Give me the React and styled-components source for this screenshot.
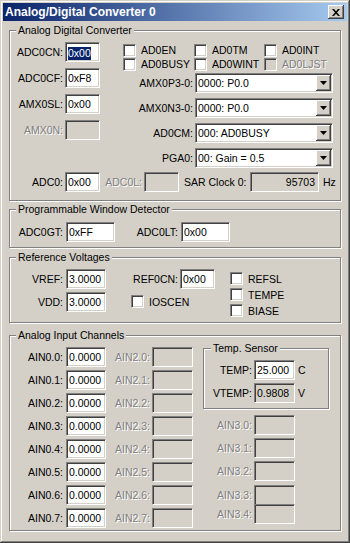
import React from 'react';
import styled, { createGlobalStyle, css } from 'styled-components';

const GlobalStyle = createGlobalStyle`
  html, body {
    margin: 0;
    padding: 0;
    background: #d4d0c8;
  }
  * {
    box-sizing: border-box;
  }
`;

const sunken = css`
  border: 1px solid;
  border-color: #808080 #ffffff #ffffff #808080;
  box-shadow: inset 1px 1px #404040, inset -1px -1px #d4d0c8;
`;

const raised = css`
  background: #d4d0c8;
  box-shadow: inset -1px -1px #404040, inset 1px 1px #ffffff, inset -2px -2px #808080;
`;

const Window = styled.div`
  width: 350px;
  height: 543px;
  padding: 3px;
  background: #d4d0c8;
  box-shadow: inset -1px -1px #404040, inset 1px 1px #d4d0c8,
    inset -2px -2px #808080, inset 2px 2px #ffffff;
  font-family: "Liberation Sans", Arial, sans-serif;
  font-size: 10.5px;
  color: #000;
  display: flex;
  flex-direction: column;
  overflow: hidden;
`;

const TitleBar = styled.div`
  height: 18px;
  flex: none;
  display: flex;
  align-items: center;
  justify-content: space-between;
  padding: 0 3px 0 2px;
  background: linear-gradient(to right, #0a246a, #a6caf0);
  color: #fff;
  font-size: 12px;
  font-weight: bold;
  white-space: nowrap;
`;

const CloseButton = styled.div`
  width: 16px;
  height: 14px;
  display: flex;
  align-items: center;
  justify-content: center;
  ${raised}
`;

const Body = styled.div`
  padding: 3px 6px 0;
  display: flex;
  flex-direction: column;
`;

const Group = styled.fieldset`
  margin: ${p => p.$mt || 0}px 0 0;
  padding: ${p => p.$pt}px 0 ${p => p.$pb}px;
  width: ${p => (p.$w ? `${p.$w}px` : 'auto')};
  border: 1px solid #808080;
  box-shadow: 1px 1px #ffffff, inset 1px 1px #ffffff;
  min-width: 0;
`;

const Legend = styled.legend`
  margin-left: ${p => p.$ml ?? 6}px;
  padding: 0 2px;
  height: 12px;
  line-height: 12px;
  background: #d4d0c8;
  white-space: nowrap;
`;

const Row = styled.div`
  display: flex;
  align-items: center;
  height: ${p => p.$h || 20}px;
  margin-top: ${p => p.$mt || 0}px;
  flex: none;
`;

const Label = styled.span`
  flex: none;
  width: ${p => (p.$w ? `${p.$w}px` : 'auto')};
  margin-left: ${p => p.$ml || 0}px;
  margin-right: ${p => p.$gap ?? 2}px;
  text-align: ${p => p.$align || 'right'};
  white-space: nowrap;
  ${p =>
    p.$disabled &&
    css`
      color: #808080;
      text-shadow: 1px 1px 0 #ffffff;
    `}
`;

const Box = styled.div`
  flex: none;
  width: ${p => p.$w}px;
  height: 20px;
  ${sunken}
  background: ${p => (p.$face ? '#d4d0c8' : '#ffffff')};
  padding: 0 3px 0 2px;
  line-height: 18px;
  text-align: ${p => (p.$right ? 'right' : 'left')};
  white-space: nowrap;
  overflow: hidden;
`;

const Selected = styled.span`
  display: inline-block;
  background: #0a246a;
  color: #fff;
  line-height: 13px;
  vertical-align: middle;
`;

const Unit = styled.span`
  margin-left: ${p => p.$ml || 3}px;
  white-space: nowrap;
`;

const Check = styled.span`
  flex: none;
  width: 13px;
  height: 13px;
  ${sunken}
  background: ${p => (p.$disabled ? '#d4d0c8' : '#ffffff')};
`;

const CheckItem = styled.div`
  display: flex;
  align-items: center;
  gap: 5px;
  height: ${p => p.$h || 13}px;
  margin-top: ${p => p.$mt || 0}px;
  white-space: nowrap;
`;

const CheckText = styled.span`
  ${p =>
    p.$disabled &&
    css`
      color: #808080;
      text-shadow: 1px 1px 0 #ffffff;
    `}
`;

const Combo = styled.div`
  flex: none;
  width: ${p => p.$w}px;
  height: 20px;
  ${sunken}
  background: #fff;
  display: flex;
  align-items: center;
  padding: 1px 1px 1px 2px;
`;

const ComboText = styled.span`
  flex: 1;
  white-space: nowrap;
  overflow: hidden;
`;

const DropButton = styled.span`
  flex: none;
  width: 15px;
  height: 16px;
  display: flex;
  align-items: center;
  justify-content: center;
  ${raised}
`;

const AdcTop = styled.div`
  display: flex;
  gap: 23px;
`;

const Stack = styled.div`
  flex: none;
  display: flex;
  flex-direction: column;
  gap: ${p => p.$gap || 0}px;
  width: ${p => (p.$w ? `${p.$w}px` : 'auto')};
  margin-left: ${p => p.$ml || 0}px;
  margin-top: ${p => p.$mt || 0}px;
`;

const CheckGrid = styled.div`
  display: grid;
  grid-template-columns: 71px 70px 69px;
  grid-auto-rows: 14px;
  margin: 1px 0 2px;
`;

const Columns = styled.div`
  display: flex;
  align-items: flex-start;
`;

const Field = ({ label, lw, gap = 2, bw, children, disabled, face, right, mt, unit }) => (
  <Row $mt={mt}>
    <Label $w={lw} $gap={gap} $disabled={disabled}>{label}</Label>
    <Box $w={bw} $face={face || disabled} $right={right}>{children}</Box>
    {unit && <Unit>{unit}</Unit>}
  </Row>
);

const CheckBox = ({ label, disabled, mt, h }) => (
  <CheckItem $mt={mt} $h={h}>
    <Check $disabled={disabled} />
    <CheckText $disabled={disabled}>{label}</CheckText>
  </CheckItem>
);

const DropDown = ({ label, value }) => (
  <Row>
    <Label $w={70} $gap={2}>{label}</Label>
    <Combo $w={138}>
      <ComboText>{value}</ComboText>
      <DropButton>
        <svg width="7" height="4" viewBox="0 0 7 4">
          <path d="M0 0h7L3.5 4z" fill="#000" />
        </svg>
      </DropButton>
    </Combo>
  </Row>
);

const adcChecks = [
  { label: 'AD0EN' },
  { label: 'AD0TM' },
  { label: 'AD0INT' },
  { label: 'AD0BUSY' },
  { label: 'AD0WINT' },
  { label: 'AD0LJST', disabled: true },
];

const combos = [
  ['AMX0P3-0:', '0000: P0.0'],
  ['AMX0N3-0:', '0000: P0.0'],
  ['AD0CM:', '000: AD0BUSY'],
  ['PGA0:', '00: Gain = 0.5'],
];

const ain0 = [0, 1, 2, 3, 4, 5, 6, 7];
// AIN3.x boxes don't sit on the same pitch as the others in the original
const ain3Gaps = [0, 3, 3, 4, -1];

export default function App() {
  return (
    <>
      <GlobalStyle />
      <Window>
        <TitleBar>
          <span>Analog/Digital Converter 0</span>
          <CloseButton>
            <svg width="8" height="7" viewBox="0 0 8 7">
              <path d="M0 0h2l2 2.2L6 0h2L5 3.5 8 7H6L4 4.8 2 7H0l3-3.5z" fill="#000" />
            </svg>
          </CloseButton>
        </TitleBar>

        <Body>
          <Group $pt={6} $pb={8}>
            <Legend>Analog Digital Converter</Legend>
            <AdcTop>
              <Stack $w={90} $gap={6}>
                <Field label="ADC0CN:" lw={53} bw={35}>
                  <Selected>0x00</Selected>
                </Field>
                <Field label="ADC0CF:" lw={53} bw={35}>0xF8</Field>
                <Field label="AMX0SL:" lw={53} bw={35}>0x00</Field>
                <Field label="AMX0N:" lw={53} bw={35} disabled />
              </Stack>
              <Stack $w={210}>
                <CheckGrid>
                  {adcChecks.map(c => (
                    <CheckBox key={c.label} label={c.label} disabled={c.disabled} h={14} />
                  ))}
                </CheckGrid>
                <Stack $gap={5}>
                  {combos.map(([l, v]) => (
                    <DropDown key={l} label={l} value={v} />
                  ))}
                </Stack>
              </Stack>
            </AdcTop>
            <Row $mt={4}>
              <Label $w={53} $gap={2}>ADC0:</Label>
              <Box $w={35}>0x00</Box>
              <Label $w={42} $gap={2} $disabled>ADC0L:</Label>
              <Box $w={35} $face />
              <Label $w={64} $ml={5} $gap={2} $align="left">SAR Clock 0:</Label>
              <Box $w={69} $face $right>95703</Box>
              <Unit $ml={4}>Hz</Unit>
            </Row>
          </Group>

          <Group $mt={2} $pt={7} $pb={5}>
            <Legend>Programmable Window Detector</Legend>
            <Row>
              <Label $w={53} $gap={3}>ADC0GT:</Label>
              <Box $w={49}>0xFF</Box>
              <Label $w={63} $gap={3}>ADC0LT:</Label>
              <Box $w={49}>0x00</Box>
            </Row>
          </Group>

          <Group $mt={3} $pt={6} $pb={5}>
            <Legend>Reference Voltages</Legend>
            <Columns>
              <Stack $w={96} $gap={3}>
                <Field label="VREF:" lw={53} gap={3} bw={40}>3.0000</Field>
                <Field label="VDD:" lw={53} gap={3} bw={40}>3.0000</Field>
              </Stack>
              <Stack $ml={25}>
                <Field label="REF0CN:" lw={47} bw={35}>0x00</Field>
                <CheckBox label="IOSCEN" mt={6} />
              </Stack>
              <Stack $ml={15} $mt={3} $gap={3}>
                <CheckBox label="REFSL" />
                <CheckBox label="TEMPE" />
                <CheckBox label="BIASE" />
              </Stack>
            </Columns>
          </Group>

          <Group $mt={6} $pt={6} $pb={2}>
            <Legend>Analog Input Channels</Legend>
            <Columns>
              <Stack $w={96} $gap={3}>
                {ain0.map(i => (
                  <Field key={i} label={`AIN0.${i}:`} lw={53} gap={3} bw={40}>0.0000</Field>
                ))}
              </Stack>
              <Stack $gap={3}>
                {ain0.map(i => (
                  <Field key={i} label={`AIN2.${i}:`} lw={44} bw={41} disabled />
                ))}
              </Stack>
              <Stack $ml={10} $mt={-5}>
                <Group $w={126} $pt={6} $pb={5}>
                  <Legend $ml={7}>Temp. Sensor</Legend>
                  <Field label="TEMP:" lw={48} bw={41} unit="C">25.000</Field>
                  <Field label="VTEMP:" lw={48} bw={41} face unit="V" mt={3}>0.9808</Field>
                </Group>
                <Stack $mt={6}>
                  {ain3Gaps.map((g, i) => (
                    <Field key={i} label={`AIN3.${i}:`} lw={49} bw={41} disabled mt={g} />
                  ))}
                </Stack>
              </Stack>
            </Columns>
          </Group>
        </Body>
      </Window>
    </>
  );
}
